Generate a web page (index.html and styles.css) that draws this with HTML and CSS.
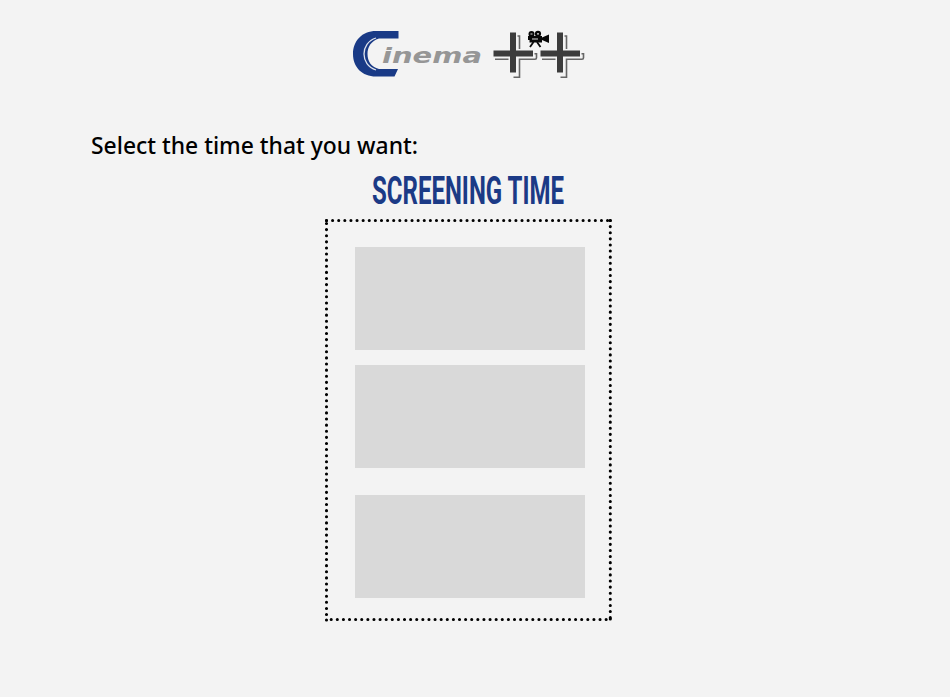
FILE: index.html
```
<!DOCTYPE html>
<html lang="en">
<head>
<meta charset="utf-8">
<title>Cinema ++ Screening Time</title>
<link rel="stylesheet" href="styles.css">
</head>
<body>
<div class="page">
  <header class="header">
    <svg class="logo" viewBox="350 26 238 56" role="img" aria-label="Cinema ++">
      <path class="blue" d="M398.500 31H376C362 31 353 41 353 54S362 76.500 376 76.500H394.500L398 69H379C371 67 367.500 61 367.500 54S371 41 379 38.500H398.500Z"/>
      <path class="ring" d="M376 38C360 43 360 65 376 70"/>
      <text class="wordmark" x="382" y="62.800" textLength="100" lengthAdjust="spacingAndGlyphs">inema</text>
      <g id="plus">
        <path class="plus" d="M510 32.500h6v18h17v6h-17v16h-6v-16h-16.500v-6H510Z"/>
        <path class="outline" d="M517.500 36h2v13M495 59.300h13.500M513.500 77.300h6v-18h15.500q1.500 0 1.500-1.500v-4h-2"/>
      </g>
      <use href="#plus" x="47"/>
      <g class="camera">
        <path class="halo" d="M527 30h23v14l-8 4h-12l-2-4z"/>
        <circle cx="531.500" cy="34" r="3"/>
        <circle cx="538" cy="33.800" r="3.100"/>
        <path d="M528 36h14v1.500l7-3V43l-7-3v2.500h-12.500V40H528Z"/>
        <path class="legs" d="M533.500 42l-3.500 5M537 42l3.500 5"/>
        <path class="lens" d="M530.500 34h2M537 33.800h2M532 39h6"/>
      </g>
    </svg>
  </header>
  <main>
    <svg class="prompt" viewBox="0 0 340 32">
      <text x="0" y="24" textLength="327" lengthAdjust="spacingAndGlyphs">Select the time that you want:</text>
    </svg>
    <svg class="title" viewBox="0 0 200 40">
      <text x="1" y="32" textLength="192" lengthAdjust="spacingAndGlyphs">SCREENING TIME</text>
    </svg>
    <section class="times">
      <svg class="dots" viewBox="0 0 288 404" aria-hidden="true">
        <path d="M2.500 2.500H284M286.300 2.500V400.500M2.500 5.500V397M7.200 401.500H283"/>
        <path d="M286.300 2.500h.01M286.300 401h.01M2.500 402h.01M2.500 2.500h.01"/>
      </svg>
      <div class="slot"></div>
      <div class="slot"></div>
      <div class="slot last"></div>
    </section>
  </main>
</div>
</body>
</html>
```
FILE: styles.css
```
body {
  margin: 0;
  background: #fff;
}

.page {
  height: 697px;
  overflow: hidden;
  background: #f3f3f3;
}

.header {
  display: flex;
  padding: 26px 0 0 350px;
}

svg {
  display: block;
}

.logo {
  width: 238px;
  height: 56px;
}

.blue {
  fill: #193a86;
}

.ring {
  fill: none;
  stroke: #dfe3ec;
  stroke-width: 1.3;
}

.wordmark {
  font: italic bold 21px "DejaVu Sans", sans-serif;
  fill: #969696;
}

.plus {
  fill: #3c3c3c;
}

.outline {
  fill: none;
  stroke: #666;
  stroke-width: 1.6;
}

.camera {
  fill: #080808;
}

.camera .halo {
  fill: #f3f3f3;
}

.camera .legs {
  fill: none;
  stroke: #080808;
  stroke-width: 1.8;
}

.camera .lens {
  stroke: #ddd;
  stroke-width: 1.2;
}

.prompt {
  width: 340px;
  height: 32px;
  margin: 48px 0 0 91px;
  font: 500 23px "Noto Sans", sans-serif;
  fill: #000;
}

.title {
  width: 200px;
  height: 40px;
  margin: 10px 0 0 371px;
  font: bold 39.5px Roboto, sans-serif;
  fill: #1b3a86;
  overflow: visible;
}

.times {
  position: relative;
  box-sizing: border-box;
  display: flex;
  flex-direction: column;
  gap: 15px;
  width: 288px;
  height: 404px;
  margin: 6px 0 0 324px;
  padding: 29px 0 0 31px;
}

.dots {
  position: absolute;
  inset: 0;
  width: 288px;
  height: 404px;
  fill: none;
  stroke: #000;
  stroke-width: 3.1;
  stroke-linecap: round;
  stroke-dasharray: 0 6.11;
}

.slot {
  width: 230px;
  height: 103px;
  background: #d9d9d9;
}

.last {
  margin-top: 12px;
}
```
